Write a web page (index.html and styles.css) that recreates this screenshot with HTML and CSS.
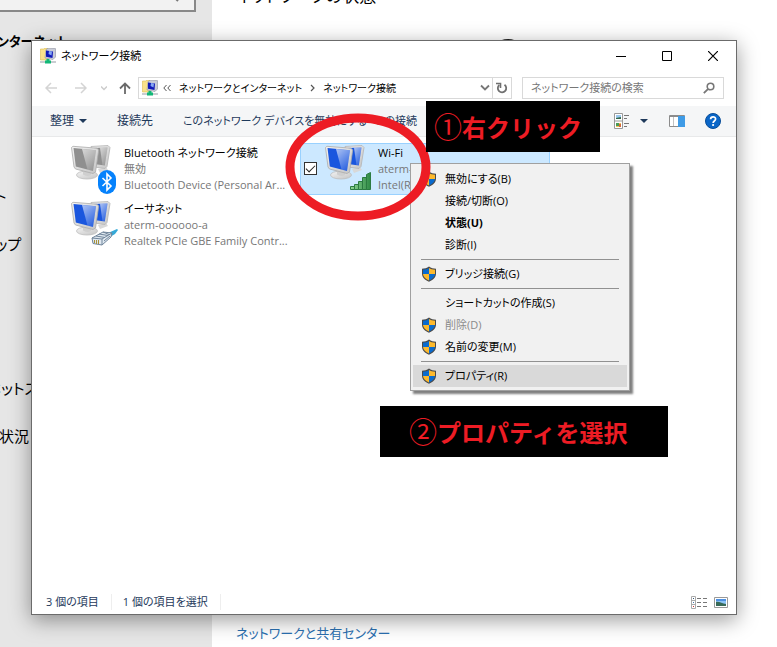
FILE: index.html
```html
<!DOCTYPE html>
<html lang="ja">
<head>
<meta charset="utf-8">
<title>ネットワーク接続</title>
<link rel="stylesheet" href="styles.css">
</head>
<body>
<svg class="defs" aria-hidden="true">
  <defs>
    <linearGradient id="shine" x1="0" y1="0" x2=".6" y2="1">
      <stop offset="0" stop-color="#fff" stop-opacity=".65"/><stop offset="1" stop-color="#fff" stop-opacity=".1"/>
    </linearGradient>
    <linearGradient id="case" x1="0" y1="0" x2="1" y2="1">
      <stop offset="0" stop-color="#f4f4f4"/><stop offset="1" stop-color="#c4c4c4"/>
    </linearGradient>
    <linearGradient id="bars" x1="0" y1="0" x2="1" y2="0">
      <stop offset="0" stop-color="#8fd694"/><stop offset="1" stop-color="#2f8a45"/>
    </linearGradient>
  </defs>
  <symbol id="pc" viewBox="0 0 48 48">
    <path d="M28 24 36 22 38 25 30 28Z" fill="#d8d8d8"/>
    <path d="M21 1.500 38 .5 40 2.500 37 21.500 35 23.500 24 22Z" fill="url(#case)" stroke="#b4b4b4" stroke-width=".8"/>
    <path d="M23 3 37.500 2.500 34.800 20.500 24 19Z" fill="currentColor"/>
    <path d="M30 2.700 37.500 2.500 34.800 20.500 32.500 20.200Z" fill="url(#shine)"/>
    <path d="M12 23 20 25 21 31 13 31Z" fill="#b4b4b4"/>
    <ellipse cx="17" cy="30" rx="10.500" ry="4" fill="url(#case)" stroke="#bdbdbd" stroke-width=".8"/>
    <path d="M13 24 21 26 21 30C18 31.500 15 31 13 29.500Z" fill="#cfcfcf"/>
    <path d="M1.500 2.500 3 1.300 27 3.200 28.700 5 25.500 27 23 28.500 5.500 24 4 22Z" fill="url(#case)" stroke="#ababab" stroke-width=".8"/>
    <path d="M3.500 3 26 5.200 23 26 5.800 21.500Z" fill="currentColor"/>
    <path d="M12 3.900 26 5.200 23 26 17.500 24.500Z" fill="url(#shine)"/>
  </symbol>
  <symbol id="shield" viewBox="0 0 16 16">
    <path d="M8 .5C10 2 12.500 2.700 15 2.700V7.500C15 11.500 12 14 8 15.700 4 14 1 11.500 1 7.500V2.700C3.500 2.700 6 2 8 .5Z" fill="#4b4b4b"/>
    <path d="M8 2V8H2V3.700C4.500 3.600 6.400 3 8 2ZM8 8H14C13.700 11 11.500 13 8 14.500Z" fill="#0a6bce"/>
    <path d="M8 2C9.600 3 11.500 3.600 14 3.700V8H8ZM2 8H8V14.500C4.500 13 2.300 11 2 8Z" fill="#fdb92c"/>
  </symbol>
  <symbol id="netfolder" viewBox="0 0 16 16">
    <path d="M.5 1H4L5 0H8V12H.5Z" fill="#f9e28a" stroke="#dcbc50" stroke-width=".6"/>
    <path d="M6 1.500 8 .2 15.500 .6V9L13 11.500 5 10Z" fill="#c9ccd8" stroke="#8f92a0" stroke-width=".6"/>
    <path d="M6 2.500 13 3.500 12.500 10 6 8.700Z" fill="#1019b8"/>
    <path d="M9 3 12 3.400 11.500 7.500 8.500 6Z" fill="#86a8f3"/>
    <path d="M0 13H16V15H0Z" fill="#c9cdd1"/>
    <path d="M6.500 11H9.500V12.500H11V15.500H5V12.500H6.500Z" fill="#12b877"/>
  </symbol>
</svg>

<div class="desktop">
  <aside class="side">
    <div class="side-search"><svg width="10" height="10" viewBox="0 0 10 10"><path d="M2 1 6 5" stroke="#777" stroke-width="2"/></svg></div>
    <p class="side-title">ンターネット</p>
    <ul class="side-nav">
      <li>イーサネット</li>
      <li>ダイヤルアップ</li>
      <li>VPN</li>
      <li>機内モード</li>
      <li>モバイル ホットスポット</li>
      <li>データ使用状況</li>
    </ul>
  </aside>
  <main class="settings">
    <h1>ネットワークの状態</h1>
    <span class="globe"></span>
    <a href="#">ネットワークと共有センター</a>
  </main>
</div>

<section class="window">
  <header class="titlebar">
    <svg width="16" height="16"><use href="#netfolder"/></svg>
    <span class="title">ネットワーク接続</span>
    <button aria-label="最小化"><svg width="10" height="10"><path d="M0 5.500H10" stroke="#000"/></svg></button>
    <button aria-label="最大化"><svg width="10" height="10"><path d="M.5 .5H9.500V9.500H.5Z" fill="none" stroke="#000"/></svg></button>
    <button aria-label="閉じる"><svg width="10" height="10"><path d="M0 0 10 10M10 0 0 10" stroke="#000" stroke-width="1.200"/></svg></button>
  </header>

  <div class="navrow">
    <button class="nav" aria-label="戻る"><svg width="12" height="12"><path d="M12 6H1M6 1 1 6 6 11" fill="none" stroke="#d4d4d4" stroke-width="1.500"/></svg></button>
    <button class="nav" aria-label="進む"><svg width="12" height="12"><path d="M0 6H11M6 1 11 6 6 11" fill="none" stroke="#d4d4d4" stroke-width="1.500"/></svg></button>
    <button class="nav small" aria-label="履歴"><svg width="6" height="6"><path d="M0 1.500 3 4.500 6 1.500" fill="none" stroke="#ccc" stroke-width="1.500"/></svg></button>
    <button class="nav up" aria-label="上へ"><svg width="12" height="12"><path d="M6 12V1.500M1 6.500 6 1.500 11 6.500" fill="none" stroke="#6a6a6a" stroke-width="1.800"/></svg></button>
    <div class="address">
      <svg width="16" height="16"><use href="#netfolder"/></svg>
      <svg width="8" height="8"><path d="M3.500 1 .8 4 3.500 7M7.500 1 4.800 4 7.500 7" fill="none" stroke="#555"/></svg>
      <button>ネットワークとインターネット</button>
      <svg width="5" height="8"><path d="M1 1 4 4 1 7" fill="none" stroke="#555" stroke-width="1.200"/></svg>
      <button>ネットワーク接続</button>
      <button class="drop" aria-label="履歴を表示"><svg width="10" height="8"><path d="M1 1.500 5 5.500 9 1.500" fill="none" stroke="#777" stroke-width="1.800"/></svg></button>
      <button class="refresh" aria-label="更新"><svg width="12" height="12"><path d="M8.500 2.800A4.200 4.200 0 1 1 3.300 3" fill="none" stroke="#707070" stroke-width="1.800"/><path d="M0 1.500H4.500V6" fill="none" stroke="#707070" stroke-width="1.600"/></svg></button>
    </div>
    <label class="search">
      <input type="text" placeholder="ネットワーク接続の検索" aria-label="検索">
      <svg width="12" height="12"><circle cx="7.500" cy="4.500" r="3.300" fill="none" stroke="#777" stroke-width="1.600"/><path d="M5.200 6.800.8 11.200" stroke="#777" stroke-width="1.800"/></svg>
    </label>
  </div>

  <div class="toolbar">
    <button>整理<svg width="8" height="4"><path d="M0 0H8L4 4Z" fill="#1e395b"/></svg></button>
    <button>接続先</button>
    <button class="long">このネットワーク デバイスを無効にする</button>
    <button class="long clip">この接続</button>
    <button class="view" aria-label="表示"><svg width="16" height="16">
      <path d="M.5 .5H8.500V15.500H.5ZM.5 8H8.500" fill="#fff" stroke="#999"/><path d="M2 2H7V6H2Z" fill="#9bc8ee"/><path d="M2 5 7 4V6H2Z" fill="#34694a"/><path d="M2 10H7V14H2Z" fill="#f1c255"/><path d="M2 10H5V13H2Z" fill="#4b9b57"/><path d="M5 11H7V14H5Z" fill="#d4683b"/><path d="M10 2.500H15M10 5.500H13M10 10.500H15M10 13.500H13" stroke="#777"/></svg><svg width="8" height="4"><path d="M0 0H8L4 4Z" fill="#1e395b"/></svg></button>
    <button class="pane" aria-label="プレビュー"><svg width="16" height="12"><path d="M.5 .5H15.500V11.500H.5Z" fill="#fff" stroke="#8c8c8c"/><path d="M0 1.500H16" stroke="#8c8c8c"/><path d="M4.500 2V11" stroke="#c3c3c3"/><path d="M9 1H16V12H9Z" fill="#3f9be6"/></svg></button>
    <button class="help" aria-label="ヘルプ"><svg width="16" height="16"><circle cx="8" cy="8" r="7.500" fill="#0a66c8" stroke="#084d98"/><path d="M5.600 6.200C5.600 3 10.600 3 10.600 6.100 10.600 8 8.100 8 8.100 10" fill="none" stroke="#fff" stroke-width="1.700"/><circle cx="8.100" cy="12" r="1.100" fill="#fff"/></svg></button>
  </div>

  <div class="files">
    <article class="item">
      <span class="thumb off"><svg width="48" height="48"><use href="#pc"/></svg>
        <svg class="badge low" width="18" height="24" viewBox="0 0 18 24"><rect width="18" height="24" rx="9" fill="#0682fc"/><path d="M4.500 8 13 16 9 20V4L13 8 4.500 16" fill="none" stroke="#fff" stroke-width="1.600"/></svg></span>
      <span class="info"><b>Bluetooth ネットワーク接続</b><i>無効</i><i>Bluetooth Device (Personal Ar...</i></span>
    </article>
    <article class="item picked">
      <input type="checkbox" checked aria-label="Wi-Fi">
      <span class="thumb"><svg width="48" height="48"><use href="#pc"/></svg>
        <svg class="badge" width="22" height="18" viewBox="0 0 22 18"><path d="M.5 14.500H4.500V17.500H.5ZM4.500 12.500H8.500V17.500H4.500ZM8.500 9.500H12.500V17.500H8.500ZM12.500 5.500H16.500V17.500H12.500ZM16.500 2.500 20.500.5V17.500H16.500Z" fill="url(#bars)" stroke="#2b7b41"/></svg></span>
      <span class="info"><b>Wi-Fi</b><i>aterm-</i><i>Intel(R)</i></span>
    </article>
    <article class="item">
      <span class="thumb"><svg width="48" height="48"><use href="#pc"/></svg>
        <svg class="badge" width="27" height="17" viewBox="0 0 27 17"><path d="M17 4 26 0 27 1 24 5 19 8Z" fill="#34a9d8"/><path d="M1 9 12 3 21 4 20 8 11 16 2 14.500Z" fill="#dfe8f0" stroke="#70859b"/><path d="M1 9 11 10V16M11 10 21 4M8 5 17 6.500M5 7 14 8.500M12 3 18 5.500M13 12 19 7" fill="none" stroke="#70859b"/><path d="M3.500 11V14M5.500 11V15M7.500 11V15" stroke="#a8923a"/></svg></span>
      <span class="info"><b>イーサネット</b><i>aterm-oooooo-a</i><i>Realtek PCIe GBE Family Contr...</i></span>
    </article>
  </div>

  <footer class="status">
    <span>3 個の項目</span><span>1 個の項目を選択</span>
    <button class="first" aria-label="詳細"><svg width="16" height="13"><path d="M.5 .5H4.500V12.500H.5ZM.5 4.500H4.500M.5 8.500H4.500" fill="#fff" stroke="#aaa"/><path d="M6 2.500H10M12 2.500H16M6 6.500H10M12 6.500H16M6 10.500H10M12 10.500H16" stroke="#777"/><path d="M2 2H3V3H2Z" fill="#357"/><path d="M2 6H3V7H2Z" fill="#47a"/><path d="M2 10H3V11H2Z" fill="#c33"/></svg></button>
    <button aria-label="大アイコン"><svg width="14" height="11"><path d="M.5 .5H13.500V10.500H.5Z" fill="#fff" stroke="#999"/><path d="M2 2H12V9H2Z" fill="#8cc3f5"/><path d="M2 2H12V4H2Z" fill="#4d90e2"/><path d="M2 5C5 4 8 7 12 7V9H2Z" fill="#386a58"/></svg></button>
  </footer>
</section>

<div class="menu" role="menu">
  <button><svg width="16" height="16"><use href="#shield"/></svg>無効にする(B)</button>
  <button>接続/切断(O)</button>
  <button class="strong">状態(U)</button>
  <button>診断(I)</button>
  <hr>
  <button><svg width="16" height="16"><use href="#shield"/></svg>ブリッジ接続(G)</button>
  <hr>
  <button>ショートカットの作成(S)</button>
  <button disabled><svg width="16" height="16"><use href="#shield"/></svg>削除(D)</button>
  <button><svg width="16" height="16"><use href="#shield"/></svg>名前の変更(M)</button>
  <hr>
  <button class="hot"><svg width="16" height="16"><use href="#shield"/></svg>プロパティ(R)</button>
</div>

<svg class="ring" width="146" height="108"><ellipse cx="73" cy="54" rx="68" ry="49" fill="none" stroke="#ed1c24" stroke-width="9"/></svg>
<p class="note one"><span>①</span>右クリック</p>
<p class="note two"><span>②</span>プロパティを選択</p>
</body>
</html>
```
FILE: styles.css
```css
* { box-sizing: border-box; }
body {
  margin: 0;
  height: 100vh;
  overflow: hidden;
  position: relative;
  background: #fff;
  color: #000;
  font: 11px/16px "Open Sans", "Noto Sans CJK JP", sans-serif;
  font-feature-settings: "palt";
}
button, input { font: inherit; font-feature-settings: inherit; color: inherit; }
button { border: 0; padding: 0; background: none; white-space: nowrap; }
svg { flex: none; display: block; }
.defs { position: absolute; width: 0; height: 0; }

.desktop { display: flex; height: 100%; }
.side { width: 212px; background: #e6e6e6; overflow: hidden; }
.side-search {
  display: flex;
  justify-content: flex-end;
  width: 196px;
  height: 12px;
  padding-right: 12px;
  background: #f2f2f2;
  border: solid #888;
  border-width: 0 2px 2px 0;
}
.side-search svg { margin-top: -4px; }
.side-title { margin: 17px 0 0 -3px; font-size: 13px; line-height: 24px; font-weight: bold; white-space: nowrap; }
.side-nav { list-style: none; margin: 119px 0 0 -73px; padding: 0; font-size: 15px; line-height: 48px; white-space: nowrap; }
.settings { flex: 1; display: flex; flex-direction: column; align-items: flex-start; padding: 0 24px 4px; }
.settings h1 { margin: -18px 0 0; font-size: 17px; line-height: 28px; font-weight: normal; }
.globe { width: 36px; height: 36px; margin: 29px 0 auto 254px; border-radius: 50%; background: #222; }
.settings a { color: #2a6fb0; font-size: 13px; line-height: 20px; text-decoration: none; }

.window {
  position: absolute;
  inset: 40px 40px 32px 31px;
  display: flex;
  flex-direction: column;
  background: #fff;
  border: 1px solid #6b6b6b;
  box-shadow: 0 5px 20px rgba(0, 0, 0, .4);
}
.titlebar { display: flex; align-items: center; height: 30px; padding-left: 8px; }
.title { flex: 1; margin-left: 5px; }
.titlebar button { display: flex; justify-content: center; width: 46px; }

.navrow { display: flex; align-items: center; height: 35px; padding: 0 12px 1px 4px; }
.nav { display: flex; justify-content: center; width: 30px; }
.nav.small { width: 16px; }
.nav.up { width: 26px; }
.address, .search { display: flex; align-items: center; height: 22px; border: 1px solid #d9d9d9; }
.address { flex: 1; gap: 8px; padding-left: 3px; min-width: 0; font-size: 10px; }
.address svg + svg { margin-left: -3px; }
.drop { margin-left: auto; }
.refresh { display: flex; align-items: center; justify-content: center; width: 19px; height: 20px; border-left: 1px solid #d9d9d9; margin-left: -6px; }
.search { width: 202px; margin-left: 10px; padding: 0 8px; }
.search input { flex: 1; min-width: 0; border: 0; padding: 0; outline: 0; background: none; }
.search input::placeholder { color: #777; opacity: 1; }

.toolbar { display: flex; align-items: center; height: 31px; padding: 0 15px 0 18px; background: #f5f6f7; border-bottom: 1px solid #e8e9ea; color: #1e395b; font-size: 12px; }
.toolbar button { display: flex; align-items: center; gap: 5px; margin-right: 30px; }
.toolbar .long { margin-right: 8px; font-size: 11px; }
.toolbar .clip { margin-right: auto; }
.toolbar .view { gap: 10px; margin-right: 21px; }
.toolbar .pane { margin-right: 20px; }
.toolbar .help { margin-right: 0; }

.files { flex: 1; display: grid; grid-template-columns: repeat(auto-fill, 250px); align-content: start; gap: 4px; padding: 6px 14px; }
.item { position: relative; display: flex; height: 52px; padding: 1px 0 0 23px; border: 1px solid transparent; white-space: nowrap; }
.picked { background: #cce8ff; border-color: #99d1ff; }
.item input {
  position: absolute;
  left: 3px;
  top: 18px;
  width: 13px;
  height: 13px;
  margin: 0;
  appearance: none;
  background: #fff;
  border: 1px solid #333;
}
.item input::before { content: ""; display: block; width: 8px; height: 4px; margin: 2px 1px; border: solid #222; border-width: 0 0 1px 1px; transform: rotate(-45deg); }
.thumb { position: relative; width: 48px; color: #1a56de; }
.off { color: #8f8f8f; }
.badge { position: absolute; right: 0; bottom: 4px; }
.badge.low { right: 2px; bottom: 0; }
.info { display: flex; flex-direction: column; margin-left: 6px; color: #777; }
.info b { font-weight: normal; color: #000; }
.info i { font-style: normal; }

.status { display: flex; align-items: center; height: 24px; padding: 0 8px 0 14px; color: #1e395b; }
.status span { padding-right: 12px; margin-right: 11px; border-right: 1px solid #eee; }
.status .first { margin: 0 7px 0 auto; }

.menu {
  position: absolute;
  left: 410px;
  top: 163px;
  width: 220px;
  padding: 4px 2px 3px;
  background: #f1f1f1;
  border: 1px solid #a0a0a0;
  box-shadow: 3px 3px 2px rgba(0, 0, 0, .5);
}
.menu button { position: relative; display: flex; align-items: center; width: 100%; height: 22px; padding-left: 32px; }
.menu svg { position: absolute; left: 8px; }
.menu hr { height: 1px; margin: 3px 8px; border: 0; background: #919191; }
.menu .strong { font-weight: bold; }
.menu :disabled { color: #8a8a8a; }
.menu .hot { background: #d9d9d9; }

.ring { position: absolute; left: 285px; top: 113px; }
.note { position: absolute; display: flex; margin: 0; background: #000; color: #ed1c24; font: bold 24px/51px "Noto Sans CJK JP", sans-serif; white-space: nowrap; }
.note span { font-size: 28px; font-weight: normal; }
.one { left: 426px; top: 101px; width: 174px; padding-left: 8px; }
.two { left: 380px; top: 406px; width: 288px; padding-left: 29px; }
```
